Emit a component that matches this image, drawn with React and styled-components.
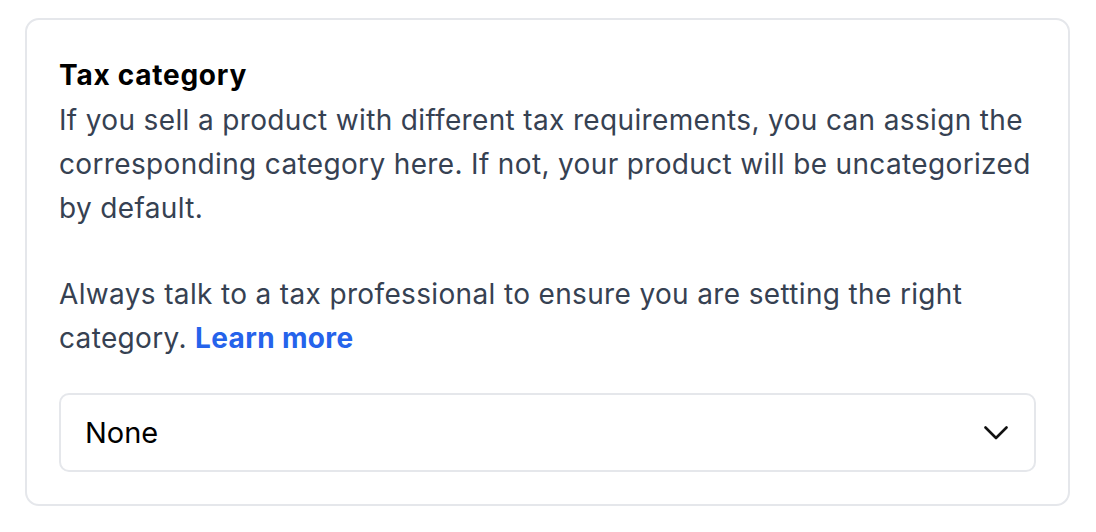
import styled, { createGlobalStyle } from 'styled-components';

const GlobalStyle = createGlobalStyle`
    html, body {
        margin: 0;
        padding: 0;
        background: #fff;
    }
    body {
        font-family: Inter, "Noto Sans", sans-serif;
        -webkit-font-smoothing: antialiased;
    }
`;

const Page = styled.div`
    padding: 18px 26px 26px 25px;
`;

const Card = styled.section`
    border: 2px solid #e5e7eb;
    border-radius: 14px;
    padding: 33px 32px 32px 32px;
    display: flex;
    flex-direction: column;
`;

const Title = styled.h3`
    margin: 0 0 1px;
    font-size: 28px;
    line-height: 44px;
    font-weight: 700;
    letter-spacing: 0.75px;
    color: #000;
`;

const Text = styled.p`
    margin: 0 0 ${props => props.gap || 0}px;
    font-size: 28px;
    line-height: 44px;
    letter-spacing: 0.35px;
    color: #364152;
`;

const Link = styled.a`
    color: #2563eb;
    font-weight: 700;
    text-decoration: none;
`;

const Select = styled.div`
    display: flex;
    align-items: center;
    justify-content: space-between;
    height: 75px;
    padding: 0 26px 0 24px;
    border: 2px solid #e5e7eb;
    border-radius: 10px;
    font-size: 29px;
    color: #000;
`;

const Chevron = () => (
    <svg width="24" height="14" viewBox="0 0 24 14" fill="none">
        <polyline points="1.5,1.5 12,12 22.5,1.5" stroke="#111" strokeWidth="2.6" strokeLinecap="round" strokeLinejoin="round" />
    </svg>
);

const App = () => {
    return (
        <Page>
            <GlobalStyle />
            <Card>
                <Title>Tax category</Title>
                <Text gap={42}>
                    If you sell a product with different tax requirements, you can assign the corresponding category here. If not, your product will be uncategorized by default.
                </Text>
                <Text gap={33}>
                    Always talk to a tax professional to ensure you are setting the right category. <Link href="#">Learn more</Link>
                </Text>
                <Select>
                    <span>None</span>
                    <Chevron />
                </Select>
            </Card>
        </Page>
    );
}

export default App;
